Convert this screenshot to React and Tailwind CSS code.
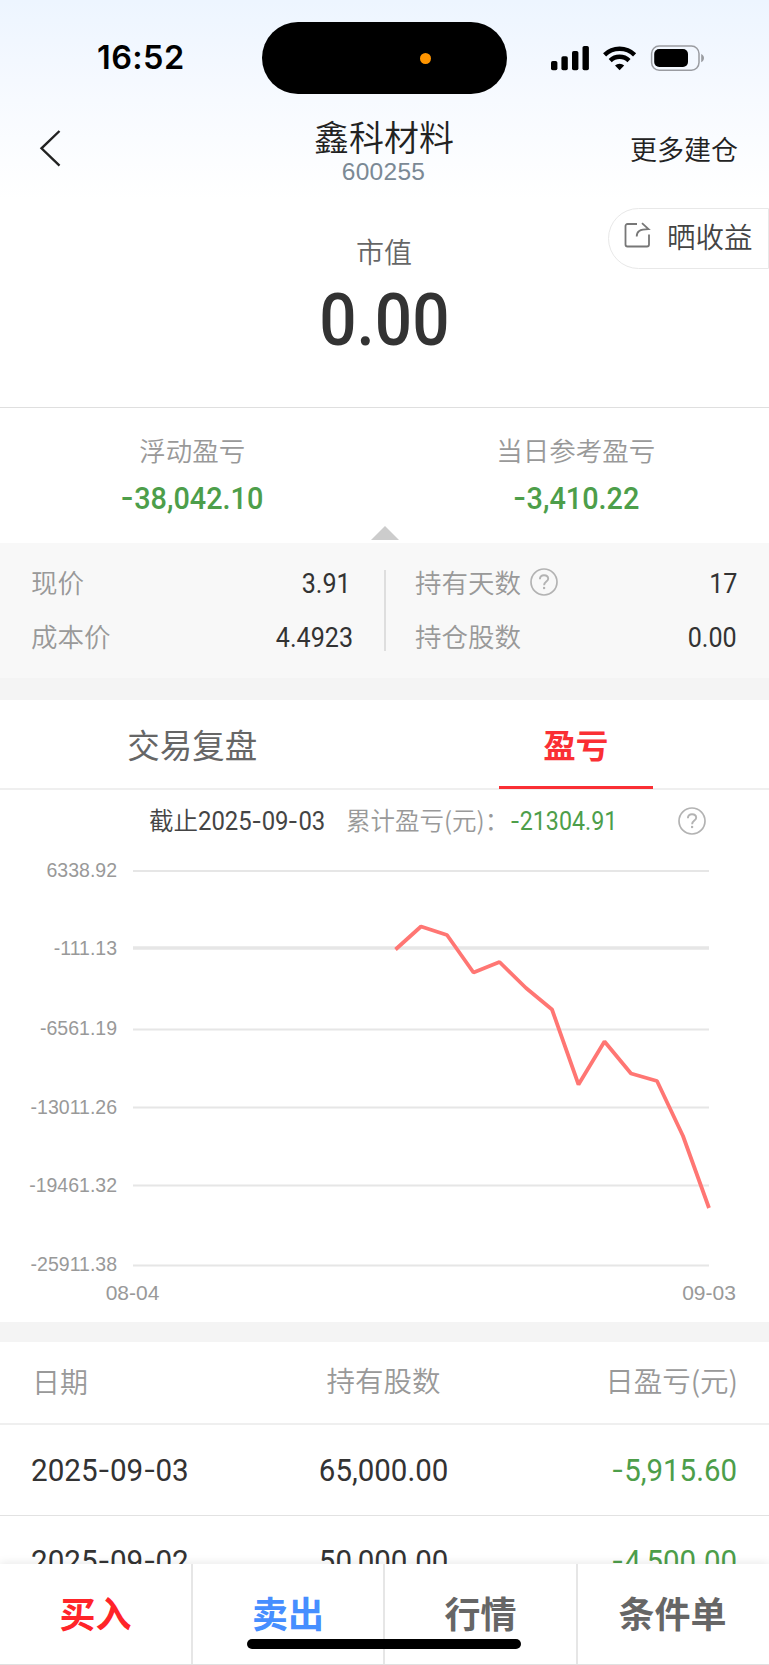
import React from "react";

function Num({ children, weight = "font-normal", className = "" }) {
  const parts = String(children).split("-");
  return (
    <span className={"inline-block whitespace-nowrap font-[Roboto,sans-serif] leading-none " + weight + " " + className}>
      {parts.map((p, i) => (
        <React.Fragment key={i}>
          {i > 0 && <span className="relative -top-[0.02em] mx-[0.07em] inline-block scale-x-125">-</span>}
          {p}
        </React.Fragment>
      ))}
    </span>
  );
}

function StatusBar() {
  return (
    <div className="flex h-[116px] shrink-0 items-center">
      <div className="w-[262px] pl-[97px] font-[Inter,sans-serif] text-[32.5px] leading-none font-semibold tracking-[0.4px] text-black">16:52</div>
      <div className="flex h-[72px] w-[245px] items-center rounded-full bg-black pl-[158px]">
        <div className="size-[11px] rounded-full bg-[#ff9500]" />
      </div>
      <svg className="ml-[43px]" width="156" height="28" viewBox="550 43 156 28">
        <g fill="#000">
          <rect x="551" y="60" width="6.4" height="9.3" rx="1.8" />
          <rect x="561.4" y="55.2" width="6.4" height="14.1" rx="1.8" />
          <rect x="572" y="50" width="6.4" height="19.3" rx="1.8" />
          <rect x="582.5" y="45" width="6.4" height="24.3" rx="1.8" />
          <path d="M619.6 69.2l-4.6-4.7a6.8 6.8 0 0 1 9.2 0z" strokeLinejoin="round" />
        </g>
        <g fill="none" stroke="#000" strokeWidth="4.4">
          <path d="M604.6 53.8a21.5 21.5 0 0 1 30 0" />
          <path d="M610.2 59.6a13.5 13.5 0 0 1 18.8 0" />
        </g>
        <rect x="651.6" y="45" width="47.4" height="24.2" rx="7.6" fill="none" stroke="#9a9ca1" strokeWidth="1.5" />
        <rect x="654.2" y="48" width="33.8" height="18" rx="5" fill="#000" />
        <path d="M701.2 53v8.2c1.8-.8 2.8-2.3 2.8-4.1s-1-3.3-2.8-4.1z" fill="#9a9ca1" />
      </svg>
    </div>
  );
}

function Header() {
  return (
    <div className="grid h-[84px] shrink-0 grid-cols-[256px_257px_256px]">
      <div className="pt-[13px] pl-[38px]">
        <svg width="24" height="38" viewBox="0 0 24 38" fill="none" stroke="#222" strokeWidth="2.4">
          <path d="M21.500 2L3.5 19.3L21.500 36.7" />
        </svg>
      </div>
      <div className="flex flex-col items-center">
        <div className="mt-[2px] -ml-px text-[35px] leading-[36px] text-[#222]">鑫科材料</div>
        <div className="mt-[6px] -ml-[2px] font-['Liberation_Sans',sans-serif] text-[24.5px] leading-[24px] font-normal tracking-[0.3px] text-[#7b8995]">600255</div>
      </div>
      <div className="pt-[19px] pr-[31px] text-right text-[27px] leading-[28px] text-[#222]">更多建仓</div>
    </div>
  );
}

function MarketValue() {
  return (
    <div className="relative flex h-[208px] shrink-0 flex-col items-center border-b border-[#dfdfdf]">
      <div className="mt-[37px] -ml-px text-[28px] leading-[28px] text-[#666]">市值</div>
      <Num weight="font-medium" className="mt-[19px] -ml-px scale-x-[0.9] text-[73px] text-[#333]">0.00</Num>
      <div className="absolute top-[8px] right-0 flex h-[61px] w-[161px] items-center rounded-l-full border border-[#e8e8e8] bg-white pl-[15px]">
        <svg className="-mt-[6px]" width="27" height="27" viewBox="0 0 27 27" fill="none" stroke="#777" strokeWidth="1.8">
          <path d="M13 2H3.5A2 2 0 0 0 1.5 4V22.5A2 2 0 0 0 3.5 24.500H23A2 2 0 0 0 25 22.500V12.500" />
          <path d="M12.700 14.500C12.700 9.500 15.500 7.200 24.500 7.200L18 1.200" />
        </svg>
        <div className="-mt-[4px] ml-[16px] text-[28.5px] leading-none text-[#444]">晒收益</div>
      </div>
    </div>
  );
}

function Summary() {
  return (
    <div className="flex h-[135px] shrink-0 flex-col">
      <div className="grid h-[118px] grid-cols-2 text-center">
        <div className="flex flex-col items-center pt-[28px]">
          <div className="text-[26.5px] leading-[28px] text-[#999]">浮动盈亏</div>
          <Num weight="font-medium" className="mt-[19px] scale-x-[0.93] text-[31px] text-[#4d9e4a]">-38,042.10</Num>
        </div>
        <div className="flex flex-col items-center pt-[28px] pr-[2px]">
          <div className="text-[26.5px] leading-[28px] text-[#999]">当日参考盈亏</div>
          <Num weight="font-medium" className="mt-[19px] scale-x-[0.93] text-[31px] text-[#4d9e4a]">-3,410.22</Num>
        </div>
      </div>
      <svg className="mx-auto" width="28" height="14" viewBox="0 0 28 14">
        <path d="M14 0L28 14H0z" fill="#ccc" />
      </svg>
    </div>
  );
}

function Help({ className = "" }) {
  return (
    <svg className={"shrink-0 " + className} width="28" height="28" viewBox="0 0 28 28" fill="none" stroke="#b3b3b3">
      <circle cx="14" cy="14" r="13" strokeWidth="1.7" />
      <path d="M9.900 11.200C9.900 8.700 11.600 7.200 14 7.200S18.200 8.700 18.200 10.800C18.200 13.600 14.100 13.700 14.100 17.200" strokeWidth="1.900" />
      <path d="M14.100 18.900V21.100" strokeWidth="2.100" />
    </svg>
  );
}

function Details() {
  return (
    <div className="flex h-[135px] shrink-0 bg-[#f8f8f8] pt-[27px] text-[26.5px] leading-none">
      <div className="flex h-[81px] w-[386px] flex-col justify-between border-r-2 border-[#dedede] pr-[31px] pl-[31px]">
        <div className="-mt-px flex h-[27px] items-center justify-between">
          <span className="text-[#999]">现价</span>
          <Num className="mt-[4px] mr-[2px] origin-right scale-x-[0.93] text-[27px] text-[#333]">3.91</Num>
        </div>
        <div className="flex h-[27px] items-center justify-between">
          <span className="-mt-[2px] text-[#999]">成本价</span>
          <Num className="mt-[2px] origin-right scale-x-[0.93] text-[27px] text-[#333]">4.4923</Num>
        </div>
      </div>
      <div className="flex h-[81px] flex-1 flex-col justify-between pr-[32px] pl-[29px]">
        <div className="-mt-px flex h-[27px] items-center">
          <span className="text-[#999]">持有天数</span>
          <Help className="-mt-[1px] ml-[9px]" />
          <Num className="mt-[4px] ml-auto origin-right scale-x-[0.93] text-[27px] text-[#333]">17</Num>
        </div>
        <div className="flex h-[27px] items-center justify-between">
          <span className="-mt-[2px] text-[#999]">持仓股数</span>
          <Num className="mt-[2px] origin-right scale-x-[0.93] text-[27px] text-[#333]">0.00</Num>
        </div>
      </div>
    </div>
  );
}

function Tabs() {
  return (
    <div className="grid h-[90px] shrink-0 grid-cols-2 border-b-2 border-[#efefef] text-[32.5px]">
      <div className="flex justify-center pt-[27px] leading-[34px] font-normal text-[#666]">交易复盘</div>
      <div className="-mb-px flex flex-col items-center justify-between pt-[27px] pr-[2px]">
        <div className="leading-[34px] font-bold text-[#fa2f34]">盈亏</div>
        <div className="h-[3px] w-[154px] bg-[#fa2f34]" />
      </div>
    </div>
  );
}

const GRID = [
  [871, 870, "6338.92"],
  [948, 948.5, "-111.13"],
  [1029.5, 1028, "-6561.19"],
  [1107.5, 1107, "-13011.26"],
  [1185.5, 1185.5, "-19461.32"],
  [1265.500, 1264.5, "-25911.38"],
];

function Chart() {
  return (
    <div className="h-[532px] shrink-0">
      <div className="flex h-[62px] items-center pl-[149px] text-[24.5px] leading-none whitespace-nowrap text-[#444]">
        <span className="-mt-[2px]">截止</span>
        <Num className="mt-px w-[125px] origin-left scale-x-[0.955] text-[25px]">2025-09-03</Num>
        <span className="-mt-[2px] ml-[23px] w-[164px] text-[#999]">累计盈亏(元)：</span>
        <Num className="mt-px w-[134px] origin-left scale-x-[0.93] text-[25px] text-[#4d9e4a]">-21304.91</Num>
        <Help className="ml-[34px]" />
      </div>
      <svg width="769" height="470" viewBox="0 852 769 470" className="block font-['Liberation_Sans',sans-serif] font-normal" fill="#999">
        {GRID.map(([y, ty, label], i) => (
          <React.Fragment key={label}>
            <line x1="133" x2="709" y1={y} y2={y} stroke="#e6e6e6" strokeWidth={i === 1 ? 3.3 : 1.8} />
            <text x="117" y={ty + 6.500} textAnchor="end" fontSize="19.5">{label}</text>
          </React.Fragment>
        ))}
        <text x="132.5" y="1299.500" textAnchor="middle" fontSize="21">08-04</text>
        <text x="709" y="1299.500" textAnchor="middle" fontSize="21">09-03</text>
        <polyline
          points="395.5,949.5 421,926.5 447,935 473.5,972.5 499.5,962 526,988 552,1009.5 578.500,1084.5 604.5,1041.5 631,1073.5 657,1081 683,1136 709,1208"
          fill="none"
          stroke="#ff7673"
          strokeWidth="3.8"
          strokeLinejoin="bevel"
        />
      </svg>
    </div>
  );
}

const ROWS = [
  ["2025-09-03", "65,000.00", "-5,915.60"],
  ["2025-09-02", "50,000.00", "-4,500.00"],
];

function Table() {
  return (
    <div className="h-[222px] shrink-0 overflow-hidden">
      <div className="grid h-[83px] grid-cols-3 items-center border-b-2 border-[#efefef] px-[32px] pb-[4px] text-[28.5px] leading-none text-[#999]">
        <div className="text-[28px]">日期</div>
        <div className="pr-[2px] text-center">持有股数</div>
        <div className="-mr-px text-right">日盈亏(元)</div>
      </div>
      {ROWS.map(([d, n, p]) => (
        <div key={d} className="grid h-[91px] grid-cols-3 items-center border-b border-[#e2e2e2] px-[32px] text-[31px] text-[#333]">
          <Num className="-ml-px origin-left scale-x-[0.955]">{d}</Num>
          <Num className="scale-x-[0.95] pr-[2px] text-center">{n}</Num>
          <Num className="origin-right scale-x-[0.95] text-right text-[#4d9e4a]">{p}</Num>
        </div>
      ))}
    </div>
  );
}

function BottomNav() {
  return (
    <div className="relative grid h-[101px] shrink-0 grid-cols-[193px_192px_193px_191px] border-b border-[#e0e0e0] bg-white text-center text-[36px] leading-[36px] font-bold text-[#666] shadow-[0_-2px_8px_rgba(0,0,0,0.08)]">
      <div className="border-r-2 border-[#e6e6e6] pt-[30px] text-[#ff2429]">买入</div>
      <div className="border-r-2 border-[#e6e6e6] pt-[30px] text-[#468eff]">卖出</div>
      <div className="border-r-2 border-[#e6e6e6] pt-[30px]">行情</div>
      <div className="pt-[30px] pr-[2px]">条件单</div>
      <div className="absolute top-[75px] left-[247px] h-[10px] w-[274px] rounded-full bg-black" />
    </div>
  );
}

export default function App() {
  return (
    <div className="flex h-[1665px] w-[769px] flex-col overflow-hidden bg-white font-['Noto_Sans_CJK_SC',sans-serif] font-[350]">
      <div className="shrink-0 bg-linear-to-b from-[#edf5ff] via-[#f7faff] to-white">
        <StatusBar />
        <Header />
      </div>
      <MarketValue />
      <Summary />
      <Details />
      <div className="h-[22px] shrink-0 bg-[#f4f4f4]" />
      <Tabs />
      <Chart />
      <div className="h-[20px] shrink-0 bg-[#f4f4f4]" />
      <Table />
      <BottomNav />
    </div>
  );
}
